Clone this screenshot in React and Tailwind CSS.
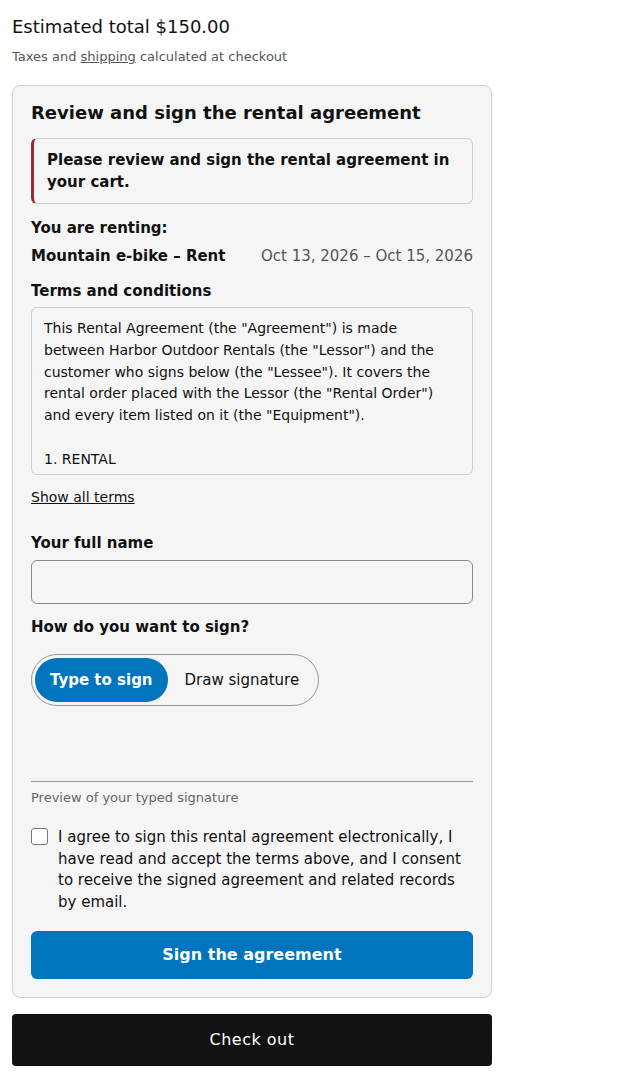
export default function App() {
  const font = { fontFamily: '"DejaVu Sans", sans-serif' };
  return (
    <div className="bg-white text-[#111] px-3 pt-[15px] pb-3" style={font}>
      <div className="w-[480px]">
        <div className="text-[18px] leading-[24px]">Estimated total $150.00</div>
        <div className="mt-[9px] text-[13px] leading-[18px] text-[#555]">
          Taxes and <span className="underline">shipping</span> calculated at checkout
        </div>

        <div className="mt-[19px] border border-[#cfcfcf] rounded-[8px] bg-[#f5f5f5] px-[18px] pt-[15px] pb-[18px]">
          <h2 className="text-[18px] leading-[24px] font-bold">Review and sign the rental agreement</h2>

          <div className="mt-[13px] border border-[#cfcfcf] border-l-[3px] border-l-[#9b2a2a] rounded-[6px] pl-[13px] pr-[12px] py-[10px] text-[15px] leading-[22px] font-bold">
            Please review and sign the rental agreement in your cart.
          </div>

          <div className="mt-[13px] text-[15px] leading-[22px] font-bold">You are renting:</div>
          <div className="mt-[6px] flex justify-between items-center text-[15px] leading-[22px]">
            <span className="font-bold">Mountain e-bike – Rent</span>
            <span className="text-[#555]">Oct 13, 2026 – Oct 15, 2026</span>
          </div>

          <div className="mt-[13px] text-[15px] leading-[22px] font-bold">Terms and conditions</div>
          <div className="mt-[5px] h-[168px] overflow-hidden border border-[#cfcfcf] rounded-[6px] px-[12px] pt-[10px] text-[14px] leading-[21.8px] whitespace-pre-line">
            {`This Rental Agreement (the "Agreement") is made between Harbor Outdoor Rentals (the "Lessor") and the customer who signs below (the "Lessee"). It covers the rental order placed with the Lessor (the "Rental Order") and every item listed on it (the "Equipment").

1. RENTAL`}
          </div>
          <div className="mt-[12px] text-[14px] leading-[20px]">
            <span className="underline">Show all terms</span>
          </div>

          <div className="mt-[25px] text-[15px] leading-[22px] font-bold">Your full name</div>
          <input className="mt-[6px] block w-full h-[44px] border border-[#8a8a8a] rounded-[6px] bg-transparent px-3 text-[15px]" />

          <div className="mt-[12px] text-[15px] leading-[22px] font-bold">How do you want to sign?</div>
          <div className="mt-[16px] inline-flex items-center border border-[#999] rounded-full p-[3px]">
            <span className="h-[44px] px-[15px] rounded-full bg-[#0074bd] text-white font-bold text-[15px] flex items-center">Type to sign</span>
            <span className="h-[44px] pl-[17px] pr-[16px] text-[15px] flex items-center">Draw signature</span>
          </div>

          <div className="h-[75px]"></div>
          <div className="border-t border-[#999]"></div>
          <div className="mt-[7px] text-[13px] leading-[18px] text-[#666]">Preview of your typed signature</div>

          <label className="mt-[20px] flex items-start gap-[10px] text-[15px] leading-[21.7px]">
            <span className="mt-[1px] shrink-0 w-[17px] h-[17px] border-[1.5px] border-[#777] rounded-[3px] bg-white"></span>
            <span>I agree to sign this rental agreement electronically, I have read and accept the terms above, and I consent to receive the signed agreement and related records by email.</span>
          </label>

          <button className="mt-[17px] w-full h-[48px] rounded-[6px] bg-[#0074bd] text-white font-bold text-[16px]">Sign the agreement</button>
        </div>

        <button className="mt-[16px] w-full h-[52px] rounded-[4px] bg-[#121212] text-white text-[16px] tracking-[0.5px]">Check out</button>
      </div>
    </div>
  );
}
